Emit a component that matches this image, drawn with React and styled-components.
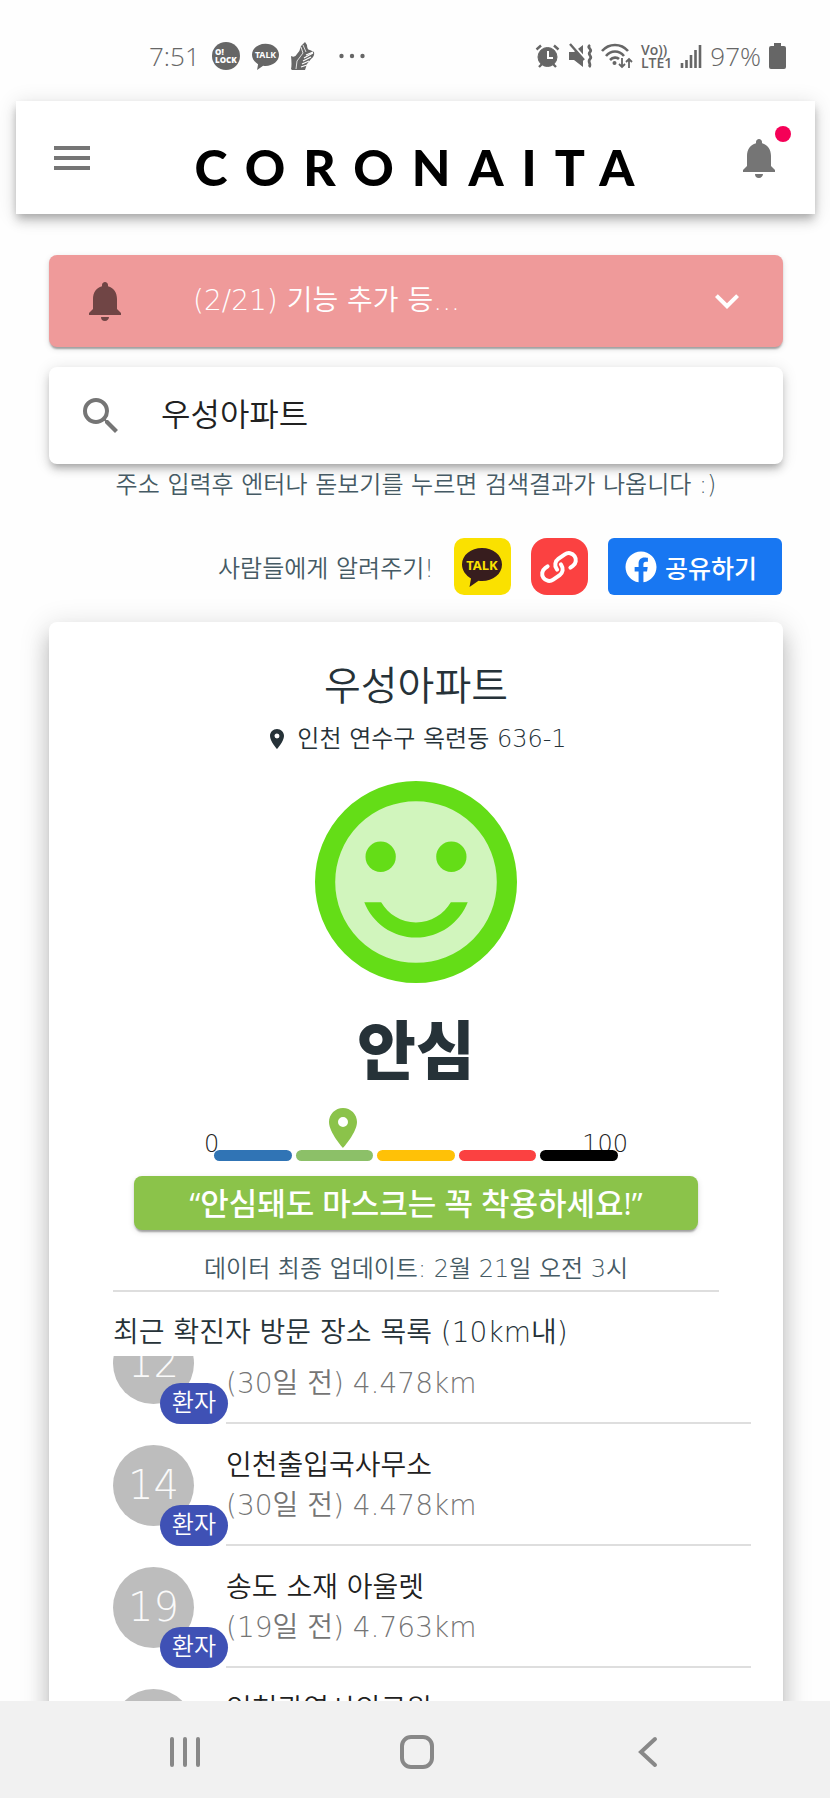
import { useEffect, useRef, useState } from "react";
import styled, { createGlobalStyle } from "styled-components";
import { MdMenu, MdNotifications, MdSearch, MdExpandMore, MdPlace } from "react-icons/md";
import { FaFacebook } from "react-icons/fa";
import React from 'react';

const LEVELS = ["#3074b5", "#8cc068", "#ffc107", "#fb4141", "#000000"];

const VISITS = [
    { id: 12, count: "12", name: "", info: "(30일 전) 4.478km" },
    { id: 14, count: "14", name: "인천출입국사무소", info: "(30일 전) 4.478km" },
    { id: 19, count: "19", name: "송도 소재 아울렛", info: "(19일 전) 4.763km" },
    { id: 20, count: "", name: "인천광역시의료원", info: "" },
];

function StatusIcons() {
    return (
        <StatusGroup $gap="8px">
            <svg width="25" height="24" viewBox="0 0 25 24" fill="none" stroke="#666">
                <circle cx="12.500" cy="13" r="9.500" fill="#666" />
                <path d="M1.500 5.500L6 1.500M23.500 5.500L19 1.500M4 23l3-3M21 23l-3-3" strokeWidth="2.400" />
                <path d="M13 7v7h5" stroke="#fff" strokeWidth="2" />
            </svg>
            <svg width="25" height="26" viewBox="0 0 25 26" fill="none" stroke="#666">
                <path d="M1 9h5l9-7v22l-9-7H1z" fill="#666" stroke="none" />
                <path d="M1 -2l17 19" stroke="#fff" strokeWidth="3" />
                <path d="M2 1l14 16" strokeWidth="2.400" />
                <path d="M22 2c-4 3 3 4 0 7s3 4 0 7 2 5-1 8" strokeWidth="2.800" />
            </svg>
            <svg width="32" height="26" viewBox="0 0 32 26" fill="none" stroke="#666" strokeWidth="2.600">
                <path d="M1 8c7-8 19-8 26 0M5 13c5-6 13-6 18 0M9 17c3-3 7-3 9-1" />
                <circle cx="13.500" cy="20" r="2" fill="#666" stroke="none" />
                <path d="M21 15v9M18 21l3 3 3-3M28 25v-9M25 19l3-3 3 3" strokeWidth="1.800" />
            </svg>
            <Volte>
                <span>Vo))</span>
                <span>LTE1</span>
            </Volte>
            <svg width="22" height="24" viewBox="0 0 22 24" stroke="#666" strokeWidth="2.600">
                <path d="M2 24v-5M6.500 24v-8M11 24V11M15.500 24V6M20 24V1" />
            </svg>
            <StatusText>97%</StatusText>
            <svg width="17" height="26" viewBox="0 0 17 26" fill="#666">
                <path d="M5 0h7v3h3q2 0 2 2v19q0 2-2 2H2q-2 0-2-2V5q0-2 2-2h3z" />
            </svg>
        </StatusGroup>
    );
}

function TalkBubble({ width, color, textColor }) {
    return (
        <svg width={width} height={width} viewBox="0 0 40 40" fill={color}>
            <path d="M20 1C9 1 0 8 0 17.500c0 6 4 11 9 14L7.500 40l9-6.300q1.700.3 3.500.3c11 0 20-7 20-16.500S31 1 20 1z" />
            <text x="20" y="22.500" fontSize="13" fontWeight="700" fontFamily="Noto Sans, sans-serif" textAnchor="middle" fill={textColor}>TALK</text>
        </svg>
    );
}

function SmileFace() {
    return (
        <svg width="202" height="202" viewBox="2 2 20 20" fill="#64dd17">
            <circle cx="12" cy="12" r="9" fill="#d1f5bd" stroke="#64dd17" strokeWidth="2" />
            <circle cx="8.500" cy="9.500" r="1.500" />
            <circle cx="15.500" cy="9.500" r="1.500" />
            <path d="M12 16c-1.480 0-2.750-.81-3.450-2H6.880c.8 2.050 2.790 3.500 5.120 3.500s4.320-1.450 5.120-3.500h-1.670c-.7 1.190-1.970 2-3.450 2z" />
        </svg>
    );
}

function VisitList() {
    const listRef = useRef(null);

    useEffect(() => {
        listRef.current.scrollTop = 54;
    }, []);

    return (
        <List ref={listRef}>
            {VISITS.map((visit) => (
                <Visit key={visit.id}>
                    <Avatar>
                        {visit.count}
                        <Tag>환자</Tag>
                    </Avatar>
                    <VisitBody>
                        <VisitName>{visit.name}</VisitName>
                        <VisitInfo>{visit.info}</VisitInfo>
                    </VisitBody>
                </Visit>
            ))}
        </List>
    );
}

function App() {
    const [keyword, setKeyword] = useState("우성아파트");

    return (
        <Screen>
            <GlobalStyle />
            <StatusBar>
                <StatusGroup $gap="12px">
                    <StatusText>7:51</StatusText>
                    <svg width="28" height="28" viewBox="0 0 28 28">
                        <circle cx="14" cy="14" r="14" fill="#666" />
                        <text x="3" y="13" fontSize="8" fontWeight="800" fontFamily="Open Sans, sans-serif" fill="#fff">O!</text>
                        <text x="3" y="21" fontSize="8" fontWeight="800" fontFamily="Open Sans, sans-serif" fill="#fff">LOCK</text>
                    </svg>
                    <TalkBubble width="27" color="#666" textColor="#fff" />
                    <svg width="24" height="28" viewBox="0 0 24 28">
                        <path d="M0 27q1-4 0-13 4 2 6-2 3-3 4-8l4-4 2 3q0 5 3 5l4 2q1 4-3 7l-4 5-2 6H1z" fill="#666" />
                        <path d="M13 16l9-5M12 19l8-4M11 22l7-3M10 25l6-2M15 13l7-3" stroke="#fff" strokeWidth="1.200" />
                        <path d="M10 5l2 6-6 8-1 8M12 3l3 7" stroke="#fff" strokeWidth="0.800" fill="none" />
                    </svg>
                    <Dots width="26" height="6" viewBox="0 0 26 6" fill="#666">
                        <circle cx="2.500" cy="3" r="2.200" />
                        <circle cx="13" cy="3" r="2.200" />
                        <circle cx="23.500" cy="3" r="2.200" />
                    </Dots>
                </StatusGroup>
                <StatusIcons />
            </StatusBar>

            <Header>
                <IconButton aria-label="menu"><MdMenu /></IconButton>
                <Logo>CORONAITA</Logo>
                <IconButton aria-label="notifications">
                    <MdNotifications />
                    <Dot />
                </IconButton>
            </Header>

            <Content>
                <Notice>
                    <MdNotifications color="#704545" />
                    <NoticeText>(2/21) 기능 추가 등...</NoticeText>
                    <MdExpandMore />
                </Notice>

                <SearchBox>
                    <IconButton aria-label="search"><MdSearch /></IconButton>
                    <SearchInput
                        aria-label="address"
                        value={keyword}
                        onChange={(e) => setKeyword(e.target.value)}
                    />
                </SearchBox>
                <Hint>주소 입력후 엔터나 돋보기를 누르면 검색결과가 나옵니다 :)</Hint>

                <Share>
                    <span>사람들에게 알려주기!</span>
                    <ShareButton color="#fae100" aria-label="kakao">
                        <TalkBubble width="40" color="#371d1e" textColor="#fae100" />
                    </ShareButton>
                    <ShareButton color="#fb4141" aria-label="link" $round>
                        <svg width="42" height="38" viewBox="0 0 42 38" fill="none" stroke="#fff" strokeWidth="4" strokeLinecap="round">
                            <g transform="rotate(-35 21 19)">
                                <path d="M12 12H9a7 7 0 0 0 0 14h8a7 7 0 0 0 7-7v-1" />
                                <path d="M30 26h3a7 7 0 0 0 0-14h-8a7 7 0 0 0-7 7v1" />
                            </g>
                        </svg>
                    </ShareButton>
                    <FacebookButton>
                        <FaFacebook size={32} />
                        공유하기
                    </FacebookButton>
                </Share>

                <Card>
                    <Title>우성아파트</Title>
                    <Address>
                        <MdPlace size={24} />
                        인천 연수구 옥련동 636-1
                    </Address>
                    <SmileFace />
                    <Status>안심</Status>
                    <Gauge>
                        <Marker size={48} color="#8bc34a" />
                        <Scale>
                            <span>0</span>
                            <span>100</span>
                        </Scale>
                        <Bars>
                            {LEVELS.map((color) => (
                                <Bar key={color} color={color} />
                            ))}
                        </Bars>
                    </Gauge>
                    <Banner>“안심돼도 마스크는 꼭 착용하세요!”</Banner>
                    <Updated>데이터 최종 업데이트: 2월 21일 오전 3시</Updated>
                    <ListTitle>최근 확진자 방문 장소 목록 (10km내)</ListTitle>
                    <VisitList />
                </Card>
            </Content>

            <NavBar>
                <NavButton aria-label="recents">
                    <svg width="30" height="32" viewBox="0 0 30 32" stroke="#888" strokeWidth="4" strokeLinecap="round">
                        <path d="M2 3v26M15 3v26M28 3v26" />
                    </svg>
                </NavButton>
                <NavButton aria-label="home">
                    <svg width="34" height="34" viewBox="0 0 34 34" fill="none" stroke="#888" strokeWidth="4">
                        <rect x="2" y="2" width="30" height="30" rx="9" />
                    </svg>
                </NavButton>
                <NavButton aria-label="back">
                    <svg width="20" height="32" viewBox="0 0 20 32" fill="none" stroke="#888" strokeWidth="4" strokeLinecap="round">
                        <path d="M17 3L3 16l14 13" />
                    </svg>
                </NavButton>
            </NavBar>
        </Screen>
    );
}

const GlobalStyle = createGlobalStyle`
    * {
        box-sizing: border-box;
    }
    body {
        margin: 0;
        background: #fefefe;
        color: #263238;
        font-family: "DejaVu Sans", "Noto Sans CJK KR", sans-serif;
        font-weight: 350;
    }
    button, input {
        border: 0;
        padding: 0;
        background: none;
        font: inherit;
        color: inherit;
    }
    svg {
        flex-shrink: 0;
    }
`;

const Screen = styled.div`
    height: 100vh;
    display: flex;
    flex-direction: column;
    overflow: hidden;
`;

const StatusBar = styled.div`
    height: 101px;
    flex-shrink: 0;
    padding: 11px 44px 0 149px;
    display: flex;
    align-items: center;
    justify-content: space-between;
    color: #666;
    font-family: "Open Sans", sans-serif;
`;

const StatusGroup = styled.div`
    display: flex;
    align-items: center;
    gap: ${props => props.$gap};
`;

const StatusText = styled.span`
    font-size: 26px;
    line-height: 32px;
`;

const Dots = styled.svg`
    margin-left: 12px;
`;

const Volte = styled.div`
    display: flex;
    flex-direction: column;
    font-size: 14px;
    font-weight: 600;
    line-height: 13px;
`;

const Header = styled.header`
    height: 113px;
    flex-shrink: 0;
    margin: 0 15px 0 16px;
    padding: 0 32px;
    display: flex;
    align-items: center;
    justify-content: space-between;
    background: white;
    box-shadow: 0 4px 8px -2px rgba(0, 0, 0, 0.2), 0 8px 10px rgba(0, 0, 0, 0.14), 0 2px 20px rgba(0, 0, 0, 0.12);
`;

const IconButton = styled.button`
    position: relative;
    display: flex;
    font-size: 48px;
    color: #757575;
    cursor: pointer;
`;

const Dot = styled.span`
    position: absolute;
    top: -8px;
    right: -8px;
    width: 16px;
    height: 16px;
    border-radius: 50%;
    background: #f50057;
`;

const Logo = styled.h1`
    margin: 0;
    padding: 18px 0 0 16px;
    font-family: Lato, sans-serif;
    font-size: 50px;
    font-weight: 900;
    line-height: 48px;
    letter-spacing: 18px;
    color: black;
`;

const Content = styled.main`
    flex: 1;
    min-height: 0;
    padding: 41px 47px 0 49px;
    overflow: hidden;
`;

const Notice = styled.button`
    width: 100%;
    height: 92px;
    padding: 0 32px;
    display: flex;
    align-items: center;
    border-radius: 8px;
    background: #ef9a9a;
    color: white;
    font-size: 28px;
    line-height: 40px;
    text-align: left;
    box-shadow: 0 4px 2px -2px rgba(0, 0, 0, 0.2), 0 2px 2px rgba(0, 0, 0, 0.14), 0 2px 6px rgba(0, 0, 0, 0.12);
    cursor: pointer;

    svg {
        font-size: 48px;
    }
`;

const NoticeText = styled.span`
    flex: 1;
    padding-left: 64px;
`;

const SearchBox = styled.div`
    height: 97px;
    margin-top: 20px;
    padding: 0 28px;
    display: flex;
    align-items: center;
    gap: 36px;
    border-radius: 8px;
    background: white;
    box-shadow: 0 6px 6px -4px rgba(0, 0, 0, 0.2), 0 6px 8px rgba(0, 0, 0, 0.14), 0 2px 16px rgba(0, 0, 0, 0.12);
`;

const SearchInput = styled.input`
    flex: 1;
    min-width: 0;
    padding-bottom: 8px;
    font-size: 32px;
    color: #212121;
    outline: none;
`;

const Hint = styled.p`
    margin: 0;
    padding-top: 1px;
    font-size: 24px;
    line-height: 40px;
    text-align: center;
    color: #455a64;
`;

const Share = styled.div`
    margin-top: 33px;
    padding-right: 1px;
    display: flex;
    align-items: center;
    justify-content: flex-end;
    gap: 20px;
    font-size: 24px;
    color: #455a64;
`;

const ShareButton = styled.button`
    width: 57px;
    height: 57px;
    display: flex;
    align-items: center;
    justify-content: center;
    border-radius: ${props => props.$round ? '16px' : '10px'};
    background: ${props => props.color};
    cursor: pointer;
`;

const FacebookButton = styled.button`
    height: 57px;
    padding: 0 25px 0 17px;
    display: flex;
    align-items: center;
    gap: 8px;
    border-radius: 6px;
    background: #1877f2;
    color: white;
    font-size: 25px;
    font-weight: 500;
    cursor: pointer;
`;

const Card = styled.section`
    margin-top: 27px;
    padding: 32px 32px 32px 64px;
    display: flex;
    flex-direction: column;
    align-items: center;
    border-radius: 8px;
    background: white;
    box-shadow: 0 10px 10px -6px rgba(0, 0, 0, 0.2), 0 16px 20px 2px rgba(0, 0, 0, 0.14), 0 6px 28px 4px rgba(0, 0, 0, 0.12);

    > * {
        margin-right: 32px;
    }
`;

const Title = styled.h2`
    margin-top: 0;
    margin-bottom: 1px;
    font-size: 40px;
    font-weight: 350;
    line-height: 64px;
`;

const Address = styled.div`
    margin-bottom: 22px;
    display: flex;
    align-items: center;
    gap: 8px;
    font-size: 24px;
    line-height: 40px;
`;

const Status = styled.strong`
    margin-top: 23px;
    font-size: 64px;
    font-weight: 900;
    line-height: 92px;
`;

const Gauge = styled.div`
    position: relative;
    width: 424px;
    margin-top: 34px;
`;

const Marker = styled(MdPlace)`
    position: absolute;
    top: -28px;
    left: 115px;
`;

const Scale = styled.div`
    display: flex;
    justify-content: space-between;
    font-size: 24px;
    line-height: 24px;
    color: #212121;
`;

const Bars = styled.div`
    margin: -6px 10px 0;
    display: flex;
    gap: 4px;
`;

const Bar = styled.span`
    flex: 1;
    height: 11px;
    border-radius: 6px;
    background: ${props => props.color};
    z-index: 1;
`;

const Banner = styled.div`
    align-self: stretch;
    margin: 15px 53px 0 21px;
    border-radius: 8px;
    background: #8bc34a;
    color: white;
    font-family: "Open Sans", "Noto Sans CJK KR", sans-serif;
    font-size: 31px;
    font-weight: 500;
    line-height: 54px;
    text-align: center;
    box-shadow: 0 4px 2px -2px rgba(0, 0, 0, 0.2), 0 2px 2px rgba(0, 0, 0, 0.14), 0 2px 6px rgba(0, 0, 0, 0.12);
`;

const Updated = styled.p`
    align-self: stretch;
    margin-top: 19px;
    margin-bottom: 0;
    padding-bottom: 1px;
    border-bottom: 2px solid #dedede;
    font-size: 24px;
    line-height: 40px;
    text-align: center;
    color: #455a64;
`;

const ListTitle = styled.h3`
    align-self: stretch;
    margin-top: 18px;
    margin-bottom: 0;
    font-size: 28px;
    font-weight: 350;
    line-height: 46px;
`;

const List = styled.ul`
    align-self: stretch;
    max-height: 400px;
    margin: 0;
    padding: 0;
    overflow-y: auto;
    scrollbar-width: none;
    list-style: none;
`;

const Visit = styled.li`
    height: 122px;
    display: flex;
    align-items: center;
    gap: 32px;
`;

const Avatar = styled.div`
    position: relative;
    width: 81px;
    height: 81px;
    display: flex;
    align-items: center;
    justify-content: center;
    border-radius: 50%;
    background: #bdbdbd;
    color: #fafafa;
    font-size: 40px;
`;

const Tag = styled.span`
    position: absolute;
    right: -34px;
    bottom: -20px;
    padding: 0 12px;
    border-radius: 21px;
    background: #3f51b5;
    color: white;
    font-size: 24px;
    line-height: 41px;
`;

const VisitBody = styled.div`
    flex: 1;
    align-self: stretch;
    padding-top: 22px;
    border-bottom: 2px solid #dedede;
    font-size: 28px;
    line-height: 40px;
`;

const VisitName = styled.div`
    min-height: 40px;
    color: #212121;
`;

const VisitInfo = styled.div`
    color: #757575;
`;

const NavBar = styled.nav`
    height: 97px;
    flex-shrink: 0;
    padding: 4px 66px 0 69px;
    display: flex;
    align-items: center;
    background: #f1f1f1;
    z-index: 1;
`;

const NavButton = styled.button`
    flex: 1;
    display: flex;
    justify-content: center;
    cursor: pointer;
`;

export default App;
